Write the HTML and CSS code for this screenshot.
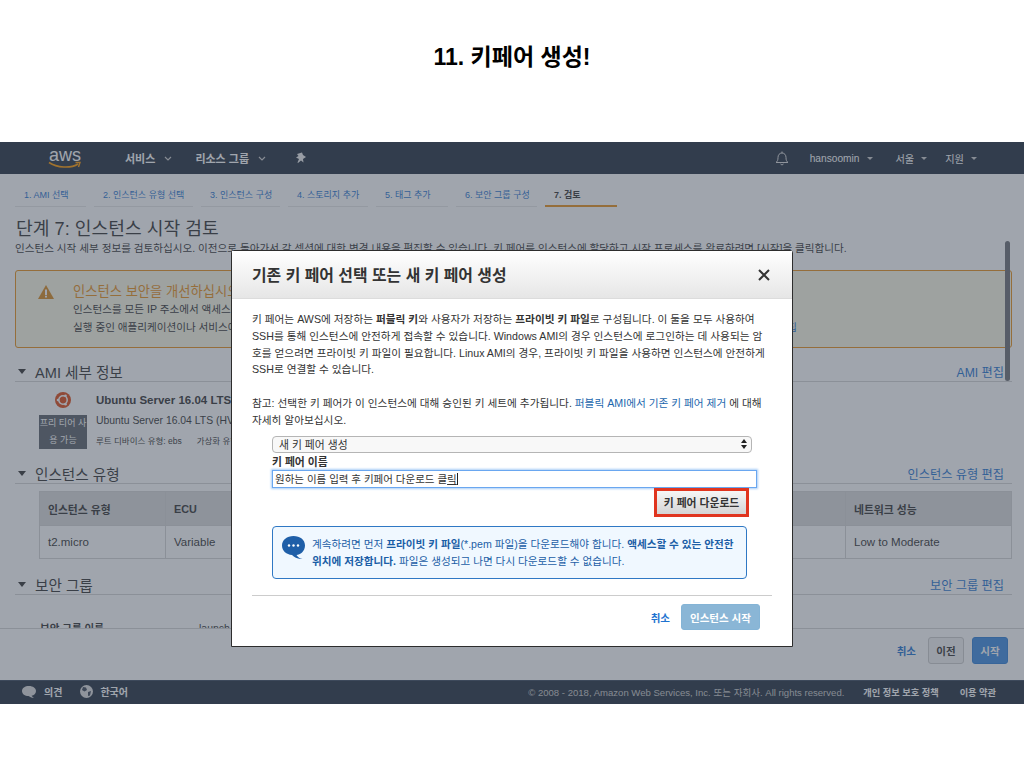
FILE: index.html
```html
<!DOCTYPE html>
<html>
<head>
    <meta charset="utf-8">
    <title>11. 키페어 생성!</title>
    <link rel="stylesheet" href="styles.css">
</head>
<body>
    <h1 class="slide-title">11. 키페어 생성!</h1>

    <div class="console">
        <!-- Top navigation -->
        <div class="topbar">
            <div class="logo">
                <span class="logo-text">aws</span>
                <svg class="logo-smile" width="34" height="8" viewBox="0 0 34 8">
                    <path d="M1 1.500C9 7 23 7.500 30 3" fill="none" stroke="#f90" stroke-width="1.600"/>
                    <path d="M27.500 1.500L32 1.500L30.500 6" fill="none" stroke="#f90" stroke-width="1.400"/>
                </svg>
            </div>
            <span class="nav-item nav-services">서비스</span>
            <svg class="chev" width="8" height="5" viewBox="0 0 8 5"><path d="M1 1l3 3 3-3" fill="none" stroke="#ccc" stroke-width="1.200"/></svg>
            <span class="nav-item nav-groups">리소스 그룹</span>
            <svg class="chev" width="8" height="5" viewBox="0 0 8 5"><path d="M1 1l3 3 3-3" fill="none" stroke="#ccc" stroke-width="1.200"/></svg>
            <svg class="pin" width="12" height="12" viewBox="0 0 12 12"><path d="M2 2L7 .5 8 3l3 2-3 2 .5 3.500L6 8.500 3 11l-.5-.5L4 7 1 5.500 3.500 4z" fill="#eee"/></svg>
            <div class="topbar-right">
                <svg class="bell" width="14" height="15" viewBox="0 0 14 15"><path d="M1 11.500c1.500-1 2-2.500 2-5 0-2.500 1.500-4.500 4-4.500s4 2 4 4.500c0 2.500.5 4 2 5zM5.500 13c.5 1 2.500 1 3 0M7 .5V2" fill="none" stroke="#ddd" stroke-width="1"/></svg>
                <span class="nav-small nav-user">hansoomin</span><i class="caret"></i>
                <span class="nav-small nav-region">서울</span><i class="caret"></i>
                <span class="nav-small nav-help">지원</span><i class="caret"></i>
            </div>
        </div>

        <!-- Wizard steps -->
        <div class="steps">
            <div class="step step-1">1. AMI 선택</div>
            <div class="step step-2">2. 인스턴스 유형 선택</div>
            <div class="step step-3">3. 인스턴스 구성</div>
            <div class="step step-4">4. 스토리지 추가</div>
            <div class="step step-5">5. 태그 추가</div>
            <div class="step step-6">6. 보안 그룹 구성</div>
            <div class="step step-7 step-active">7. 검토</div>
        </div>

        <div class="content">
            <h2 class="page-title">단계 7: 인스턴스 시작 검토</h2>
            <p class="page-desc">인스턴스 시작 세부 정보를 검토하십시오. 이전으로 돌아가서 각 섹션에 대한 변경 내용을 편집할 수 있습니다. 키 페어를 인스턴스에 할당하고 시작 프로세스를 완료하려면 [시작]을 클릭합니다.</p>

            <div class="warning">
                <svg class="warning-icon" width="16" height="14" viewBox="0 0 16 14">
                    <path d="M8 0L16 14H0z" fill="#d98a1f"/>
                    <path d="M7 4.500h2V10H7zM7 10.800h2v1.700H7z" fill="#fff"/>
                </svg>
                <div class="warning-body">
                    <div class="warning-title">인스턴스 보안을 개선하십시오. 보안 그룹이 전 세계에 개방되어 있습니다.</div>
                    <div class="warning-line">인스턴스를 모든 IP 주소에서 액세스할 수 있습니다.</div>
                    <div class="warning-line warning-last">
                        <span>실행 중인 애플리케이션이나 서비스에 대한 액세스만 허용하도록 규칙을 업데이트하십시오.</span>
                        <a class="warning-link">보안 그룹 편집</a>
                    </div>
                </div>
            </div>

            <div class="section-head">
                <span class="tri"></span><span class="section-name">AMI 세부 정보</span>
                <a class="section-edit">AMI 편집</a>
            </div>
            <div class="ami">
                <div class="ami-left">
                    <svg width="16" height="16" viewBox="0 0 16 16">
                        <circle cx="8" cy="8" r="8" fill="#dd4814"/>
                        <circle cx="8" cy="8" r="4.200" fill="none" stroke="#fff" stroke-width="1.500"/>
                        <circle cx="3" cy="8" r="1.300" fill="#fff"/>
                        <circle cx="10.500" cy="3.700" r="1.300" fill="#fff"/>
                        <circle cx="10.500" cy="12.300" r="1.300" fill="#fff"/>
                    </svg>
                    <div class="tier-badge">프리 티어 사용 가능</div>
                </div>
                <div class="ami-info">
                    <div class="ami-name">Ubuntu Server 16.04 LTS (HVM), SSD Volume Type</div>
                    <div class="ami-desc">Ubuntu Server 16.04 LTS (HVM), EBS General Purpose (SSD) Volume Type.</div>
                    <div class="ami-meta"><span>루트 디바이스 유형: ebs</span><span>가상화 유형: hvm</span></div>
                </div>
            </div>

            <div class="section-head section-type">
                <span class="tri"></span><span class="section-name">인스턴스 유형</span>
                <a class="section-edit">인스턴스 유형 편집</a>
            </div>
            <table class="type-table">
                <tr>
                    <th class="col-type">인스턴스 유형</th>
                    <th class="col-ecu">ECU</th>
                    <th>vCPU</th>
                    <th>메모리(GiB)</th>
                    <th class="col-net">네트워크 성능</th>
                </tr>
                <tr>
                    <td>t2.micro</td>
                    <td>Variable</td>
                    <td>1</td>
                    <td>1</td>
                    <td>Low to Moderate</td>
                </tr>
            </table>

            <div class="section-head section-sg">
                <span class="tri"></span><span class="section-name">보안 그룹</span>
                <a class="section-edit">보안 그룹 편집</a>
            </div>
            <div class="sg-row">
                <b class="sg-label">보안 그룹 이름</b><span>launch-wizard-1</span>
            </div>
        </div>

        <div class="actions">
            <a class="action-cancel">취소</a>
            <button class="btn-prev">이전</button>
            <button class="btn-start">시작</button>
        </div>

        <div class="footer">
            <svg width="14" height="12" viewBox="0 0 14 12"><path d="M7 0c4 0 7 2.200 7 5s-2 4.300-4.500 4.800c.8 1 2.500 2 2.500 2-2.500 0-4.500-1-5.500-1.800C3 10 0 8 0 5s3-5 7-5z" fill="#ddd"/></svg>
            <span class="foot-link foot-opinion">의견</span>
            <svg width="13" height="13" viewBox="0 0 13 13"><circle cx="6.500" cy="6.500" r="6.500" fill="#ddd"/><path d="M3 2l3 .5L7 5 4.500 6.500 2 5zM8 7l3-1-1 4.500L8 11z" fill="#3a4454"/></svg>
            <span class="foot-link foot-lang">한국어</span>
            <span class="foot-copy">© 2008 - 2018, Amazon Web Services, Inc. 또는 자회사. All rights reserved.</span>
            <span class="foot-link foot-privacy">개인 정보 보호 정책</span>
            <span class="foot-link foot-terms">이용 약관</span>
        </div>

        <div class="scrollbar"></div>
        <div class="overlay"></div>

        <!-- Key pair dialog -->
        <div class="modal">
            <div class="modal-head">
                <span class="modal-title">기존 키 페어 선택 또는 새 키 페어 생성</span>
                <svg class="modal-close" width="12" height="12" viewBox="0 0 12 12"><path d="M1 1l10 10M11 1L1 11" stroke="#333" stroke-width="2"/></svg>
            </div>
            <div class="modal-body">
                <p class="modal-text">키 페어는 AWS에 저장하는 <b>퍼블릭 키</b>와 사용자가 저장하는 <b>프라이빗 키 파일</b>로 구성됩니다. 이 둘을 모두 사용하여<br>SSH를 통해 인스턴스에 안전하게 접속할 수 있습니다. Windows AMI의 경우 인스턴스에 로그인하는 데 사용되는 암<br>호를 얻으려면 프라이빗 키 파일이 필요합니다. Linux AMI의 경우, 프라이빗 키 파일을 사용하면 인스턴스에 안전하게<br>SSH로 연결할 수 있습니다.</p>
                <p class="modal-text modal-note">참고: 선택한 키 페어가 이 인스턴스에 대해 승인된 키 세트에 추가됩니다. <a class="text-link">퍼블릭 AMI에서 기존 키 페어 제거</a> 에 대해<br>자세히 알아보십시오.</p>

                <div class="key-form">
                    <div class="key-select">
                        <span>새 키 페어 생성</span>
                        <svg width="6" height="10" viewBox="0 0 6 10"><path d="M3 0l3 4H0zM3 10L0 6h6z" fill="#222"/></svg>
                    </div>
                    <div class="key-label">키 페어 이름</div>
                    <div class="key-input">원하는 이름 입력 후 키페어 다운로드 클<span class="composing">릭</span><i class="cursor"></i></div>
                    <div class="key-download"><button class="btn-download">키 페어 다운로드</button></div>
                    <div class="key-info">
                        <svg class="info-icon" width="23" height="23" viewBox="0 0 23 23">
                            <path d="M11.500 0C18 0 23 3.800 23 9.500S18 19 14.500 19c1 1.500 3 3.500 6 4-4 .3-8-1.300-10.500-4C4.500 18.500 0 15 0 9.500S5 0 11.500 0z" fill="#1f5fa8"/>
                            <circle cx="7" cy="9.500" r="1.200" fill="#fff"/><circle cx="11.500" cy="9.500" r="1.200" fill="#fff"/><circle cx="16" cy="9.500" r="1.200" fill="#fff"/>
                        </svg>
                        <p class="info-text">계속하려면 먼저 <b>프라이빗 키 파일</b>(*.pem 파일)을 다운로드해야 합니다. <b>액세스할 수 있는 안전한<br>위치에 저장합니다.</b> 파일은 생성되고 나면 다시 다운로드할 수 없습니다.</p>
                    </div>
                </div>
                <div class="modal-foot">
                    <a class="modal-cancel">취소</a>
                    <button class="btn-launch">인스턴스 시작</button>
                </div>
            </div>
        </div>
    </div>
</body>
</html>
```

FILE: styles.css
```css
/* Slide */
* {
    box-sizing: border-box;
}

body {
    margin: 0;
    background: #fff;
    font-family: "Liberation Sans", "Noto Sans CJK KR", sans-serif;
    color: #333;
}

.slide-title {
    height: 142px;
    margin: 0;
    padding-top: 42px;
    font-size: 23px;
    line-height: 30px;
    font-weight: bold;
    color: #000;
    text-align: center;
}

/* Console frame */
.console {
    position: relative;
    height: 562px;
    display: flex;
    flex-direction: column;
    overflow: hidden;
    background: #fff;
}

.overlay {
    position: absolute;
    top: 0;
    left: 0;
    right: 0;
    bottom: 0;
    background: rgba(65, 75, 91, 0.5);
}

/* Top navigation */
.topbar {
    flex: none;
    height: 32px;
    display: flex;
    align-items: center;
    background: #232f3e;
    color: #fff;
}

.logo {
    position: relative;
    width: 34px;
    height: 32px;
    margin-left: 48px;
    margin-right: 43px;
}

.logo-text {
    display: block;
    font-size: 18px;
    line-height: 20px;
    text-align: center;
    color: #fff;
    margin-top: 3px;
}

.logo-smile {
    position: absolute;
    left: 0;
    top: 19px;
}

.nav-item {
    font-size: 11px;
    font-weight: bold;
}

.chev {
    margin-left: 9px;
}

.nav-groups {
    margin-left: 23px;
}

.pin {
    margin-left: 29px;
}

.topbar-right {
    margin-left: auto;
    display: flex;
    align-items: center;
    padding-right: 47px;
}

.bell {
    margin-right: 21px;
}

.nav-small {
    font-size: 10.200px;
}

.caret {
    width: 0;
    height: 0;
    margin-left: 7px;
    border-left: 3px solid transparent;
    border-right: 3px solid transparent;
    border-top: 3px solid #ccc;
}

.nav-region {
    margin-left: 23px;
}

.nav-help {
    margin-left: 18px;
}

/* Wizard steps */
.steps {
    flex: none;
    height: 33px;
    display: flex;
    padding-left: 15px;
}

.step {
    height: 33px;
    padding: 15px 0 0 9px;
    margin-right: 8px;
    font-size: 9px;
    line-height: 12px;
    color: #1f74d0;
    border-bottom: 1px solid #e6e6e6;
}

.step-1 { width: 71px; }
.step-2 { width: 99px; }
.step-3 { width: 79px; }
.step-4 { width: 80px; }
.step-5 { width: 72px; }
.step-6 { width: 81px; }
.step-7 { width: 72px; }

.step-active {
    color: #333;
    font-weight: bold;
    border-bottom: 2px solid #e8901a;
}

/* Review content */
.content {
    flex: none;
    height: 422px;
    padding: 0 12px 0 15px;
    overflow: hidden;
    border-bottom: 1px solid #d5d5d5;
}

.page-title {
    margin: 10px 0 0 1px;
    font-size: 18.200px;
    line-height: 24px;
    font-weight: normal;
}

.page-desc {
    margin: 0;
    font-size: 10.580px;
    line-height: 14px;
    white-space: nowrap;
}

.warning {
    display: flex;
    height: 78px;
    margin-top: 15px;
    padding: 14px 0 0 22px;
    border: 1px solid #e8901a;
    border-radius: 3px;
    background: #faf8e4;
}

.warning-icon {
    flex: none;
}

.warning-body {
    flex: 1;
    margin-left: 19px;
}

.warning-title {
    font-size: 13.300px;
    line-height: 14px;
    color: #e8901a;
    white-space: nowrap;
}

.warning-line {
    margin-top: 3px;
    font-size: 10.580px;
    line-height: 14px;
    white-space: nowrap;
}

.warning-last {
    display: flex;
    margin-top: 4px;
    padding-right: 214px;
}

.warning-link {
    margin-left: auto;
    color: #1f74d0;
}

.section-head {
    display: flex;
    align-items: center;
    height: 19px;
    margin-top: 15px;
    padding: 0 8px 1px 3px;
    border-bottom: 1px solid #d5d5d5;
}

.tri {
    width: 0;
    height: 0;
    margin-right: 9px;
    border-left: 4.500px solid transparent;
    border-right: 4.500px solid transparent;
    border-top: 5px solid #333;
}

.section-name {
    font-size: 14.600px;
}

.section-edit {
    margin-left: auto;
    font-size: 12.200px;
    color: #1f74d0;
}

.ami {
    display: flex;
    height: 71px;
}

.ami-left {
    width: 48px;
    margin: 10px 0 0 24px;
    text-align: center;
}

.ami-left svg {
    display: block;
    margin: 0 auto 7px auto;
}

.tier-badge {
    height: 34px;
    background: #5a6068;
    color: #fff;
    font-size: 9px;
    line-height: 17px;
}

.ami-info {
    margin: 11px 0 0 9px;
    white-space: nowrap;
}

.ami-name {
    font-size: 11.500px;
    line-height: 14px;
    font-weight: bold;
}

.ami-desc {
    margin-top: 7px;
    font-size: 10.400px;
    line-height: 14px;
}

.ami-meta {
    margin-top: 6px;
    font-size: 8.500px;
    line-height: 14px;
}

.ami-meta span {
    margin-right: 15px;
}

.section-type {
    margin-top: 12px;
}

.type-table {
    width: 973px;
    height: 68px;
    margin: 7px 0 0 24px;
    border-collapse: collapse;
    table-layout: fixed;
    font-size: 11.500px;
}

.type-table th,
.type-table td {
    padding: 0 8px;
    text-align: left;
    border: 1px solid #d5d5d5;
}

.type-table th {
    height: 34px;
    background: #dadada;
    font-size: 10.800px;
    font-weight: bold;
}

.type-table td {
    height: 33px;
}

.col-type { width: 126px; }
.col-ecu { width: 200px; }
.col-net { width: 166px; }

.section-sg {
    margin-top: 17px;
}

.sg-row {
    display: flex;
    margin: 26px 0 0 25px;
    font-size: 10.500px;
    line-height: 14px;
    white-space: nowrap;
}

.sg-label {
    width: 159px;
}

/* Bottom actions */
.actions {
    flex: none;
    height: 51px;
    display: flex;
    align-items: center;
    justify-content: flex-end;
    padding: 0 16px 9px 0;
}

.action-cancel {
    margin-right: 12px;
    font-size: 10.500px;
    font-weight: bold;
    color: #1f74d0;
}

.btn-prev,
.btn-start {
    width: 36px;
    height: 27px;
    padding: 0;
    border-radius: 3px;
    font-family: inherit;
    font-size: 10.500px;
    font-weight: bold;
}

.btn-prev {
    margin-right: 8px;
    border: 1px solid #ccc;
    background: #f2f2f2;
    color: #333;
}

.btn-start {
    border: 1px solid #2f7fd6;
    background: #3d8ae0;
    color: #fff;
}

/* Footer */
.footer {
    flex: none;
    height: 24px;
    display: flex;
    align-items: center;
    padding: 0 28px 2px 22px;
    background: #232f3e;
    border-top: 1px solid #39465a;
    color: #fff;
}

.foot-link {
    margin-left: 8px;
    font-size: 10px;
    font-weight: bold;
}

.foot-opinion {
    margin-right: 18px;
}

.foot-lang {
    margin-left: 7px;
}

.foot-copy {
    margin-left: auto;
    font-size: 9.550px;
    color: #c8c8c8;
}

.foot-privacy {
    margin-left: 19px;
    font-size: 9.200px;
}

.foot-terms {
    margin-left: 21px;
    font-size: 9.200px;
}

.scrollbar {
    position: absolute;
    top: 99px;
    left: 1005px;
    width: 5px;
    height: 140px;
    border-radius: 3px;
    background: #6d6f74;
}

/* Dialog */
.modal {
    position: absolute;
    top: 108px;
    left: 231px;
    width: 562px;
    height: 397px;
    background: #fff;
    border: 1px solid #2d2d2d;
    border-radius: 3px 3px 0 0;
}

.modal-head {
    height: 48px;
    display: flex;
    align-items: center;
    justify-content: space-between;
    padding: 0 22px 0 20px;
    background: linear-gradient(#fff, #e6e6e6);
    border-bottom: 1px solid #dcdcdc;
}

.modal-title {
    font-size: 15.900px;
    font-weight: bold;
    color: #333;
}

.modal-body {
    padding: 12px 20px 0 20px;
}

.modal-text {
    margin: 0;
    font-size: 10.670px;
    line-height: 16.800px;
    white-space: nowrap;
}

.modal-note {
    margin-top: 17px;
}

.text-link {
    color: #1b66ad;
}

.key-form {
    margin: 7px 0 0 20px;
}

.key-select {
    width: 480px;
    height: 17px;
    display: flex;
    align-items: center;
    justify-content: space-between;
    padding: 0 4px 0 6px;
    border: 1px solid #b5b5b5;
    border-radius: 4px;
    background: #f8f8f8;
    font-size: 10.800px;
}

.key-label {
    margin-top: 2px;
    font-size: 10.800px;
    line-height: 15px;
    font-weight: bold;
}

.key-input {
    width: 485px;
    height: 18px;
    padding-left: 2px;
    border: 1px solid #6aa7f0;
    box-shadow: 0 0 2px 1px #a9cdf7;
    font-size: 10.500px;
    line-height: 16px;
    white-space: nowrap;
}

.composing {
    text-decoration: underline;
}

.cursor {
    display: inline-block;
    width: 1px;
    height: 12px;
    vertical-align: -2px;
    background: #222;
}

.key-download {
    width: 477px;
    display: flex;
    justify-content: flex-end;
}

.btn-download {
    width: 95px;
    height: 29px;
    padding: 0;
    border: 3px solid #e0351f;
    background: linear-gradient(#f6f6f6, #d4d4d4);
    font-family: inherit;
    font-size: 10.800px;
    font-weight: bold;
    color: #333;
}

.key-info {
    width: 475px;
    height: 53px;
    display: flex;
    margin-top: 9px;
    padding: 9px 0 0 9px;
    border: 1px solid #2f78c4;
    border-radius: 4px;
    background: #f0f8ff;
}

.info-icon {
    flex: none;
}

.info-text {
    margin: 0 0 0 7px;
    font-size: 10.620px;
    line-height: 17px;
    color: #1b5ea6;
    white-space: nowrap;
}

.modal-foot {
    height: 44px;
    display: flex;
    align-items: center;
    justify-content: flex-end;
    margin-top: 16px;
    padding-right: 12px;
    border-top: 1px solid #ccc;
}

.modal-cancel {
    margin-right: 11px;
    font-size: 10.500px;
    font-weight: bold;
    color: #1f74d0;
}

.btn-launch {
    width: 79px;
    height: 26px;
    padding: 0;
    border: 1px solid #84b4d6;
    border-radius: 3px;
    background: #8ab6d6;
    font-family: inherit;
    font-size: 10.500px;
    font-weight: bold;
    color: #fff;
}
```
